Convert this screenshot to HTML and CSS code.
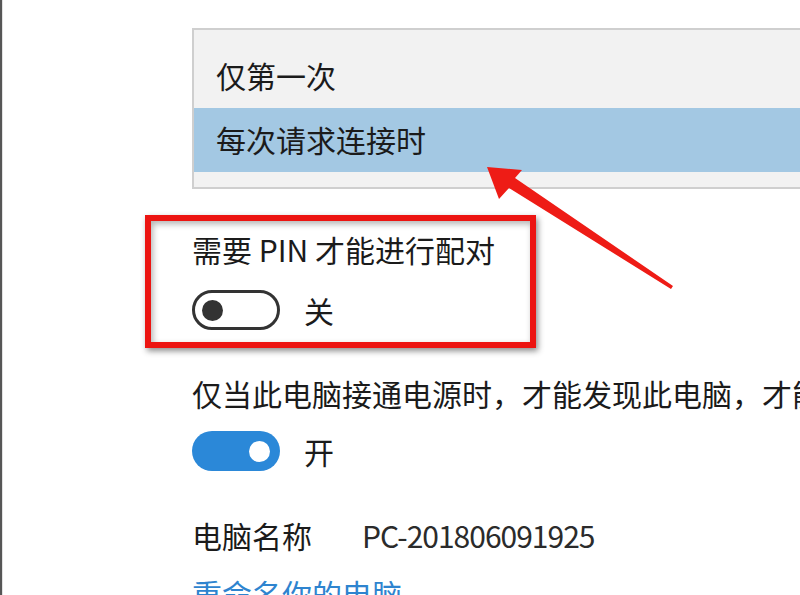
FILE: index.html
```html
<!DOCTYPE html>
<html lang="zh-CN">
<head>
<meta charset="utf-8">
<link rel="stylesheet" href="styles.css">
</head>
<body>
<div class="frame">
  <div class="content">
    <div class="dropdown">
      <div class="option">仅第一次</div>
      <div class="option selected">每次请求连接时</div>
    </div>

    <div class="pin-section">
      <div class="setting-title">需要 PIN 才能进行配对</div>
      <div class="toggle-row">
        <span class="toggle off"><span class="knob"></span></span>
        <span class="toggle-label">关</span>
      </div>
      <div class="annot-box"></div>
    </div>

    <div class="setting-title second">仅当此电脑接通电源时，才能发现此电脑，才能连接</div>
    <div class="toggle-row on-row">
      <span class="toggle on"><span class="knob"></span></span>
      <span class="toggle-label">开</span>
    </div>

    <div class="name-row">
      <span class="name-label">电脑名称</span>
      <span class="name-value">PC-201806091925</span>
    </div>
    <a class="rename-link" href="#">重命名你的电脑</a>
  </div>

  <svg class="annot-arrow" width="800" height="595" viewBox="0 0 800 595">
    <polygon points="485,167 520,170 513,178 671,286 669,289 507,188 497,199" fill="#ee1c16"/>
  </svg>
</div>
</body>
</html>
```

FILE: styles.css
```css
html, body {
  margin: 0;
  padding: 0;
  background: #ffffff;
}

body {
  font-family: "Noto Sans CJK SC", "Noto Sans", sans-serif;
  color: #1b1b1b;
}

.frame {
  position: relative;
  width: 800px;
  height: 595px;
  box-sizing: border-box;
  border-left: 2px solid #565656;
  box-shadow: inset 1px 0 0 #e2e2e2;
  overflow: hidden;
  background: #ffffff;
}

.content {
  padding: 28px 0 0 190px;
  white-space: nowrap;
}

.dropdown {
  width: 640px;
  box-sizing: border-box;
  border: 2px solid #cfcfcf;
  background: #f2f2f2;
  padding: 14px 0 15px;
}

.option {
  height: 64px;
  line-height: 62px;
  padding-left: 22px;
  font-size: 30px;
  color: #1b1b1b;
}

.option.selected {
  background: #a3c8e3;
}

.pin-section {
  position: relative;
  margin-top: 41px;
}

.setting-title {
  font-size: 30px;
  line-height: 38px;
  height: 40px;
  color: #1b1b1b;
}

.setting-title.second {
  margin-top: 44px;
}

.toggle-row {
  display: flex;
  align-items: center;
  gap: 24px;
  margin-top: 20px;
  height: 40px;
}

.on-row {
  margin-top: 17px;
}

.toggle {
  position: relative;
  display: block;
  width: 88px;
  height: 40px;
  box-sizing: border-box;
  border-radius: 20px;
  flex: none;
}

.toggle.off {
  border: 3px solid #333333;
  background: #ffffff;
}

.toggle.on {
  background: #2b88d8;
}

.knob {
  position: absolute;
  width: 21px;
  height: 21px;
  border-radius: 50%;
  top: 50%;
  margin-top: -10.5px;
}

.toggle.off .knob {
  left: 7px;
  background: #333333;
}

.toggle.on .knob {
  left: 57px;
  background: #ffffff;
}

.toggle-label {
  font-size: 30px;
  line-height: 38px;
  color: #1b1b1b;
}

.annot-box {
  position: absolute;
  top: -15px;
  left: -47px;
  width: 391px;
  height: 133px;
  box-sizing: border-box;
  border: 6px solid #ec1411;
  box-shadow: 2px 3px 6px rgba(0, 0, 0, 0.45), inset 2px 3px 6px rgba(0, 0, 0, 0.3);
  pointer-events: none;
}

.name-row {
  display: flex;
  align-items: center;
  gap: 50px;
  margin-top: 44px;
  height: 40px;
  font-size: 30px;
  line-height: 38px;
}

.name-value {
  color: #2b2b2b;
  letter-spacing: -1px;
}

.rename-link {
  display: block;
  margin-top: 19px;
  font-size: 30px;
  line-height: 38px;
  color: #2e84cf;
  text-decoration: none;
}

.annot-arrow {
  position: absolute;
  top: 0;
  left: 0;
  pointer-events: none;
}
```
